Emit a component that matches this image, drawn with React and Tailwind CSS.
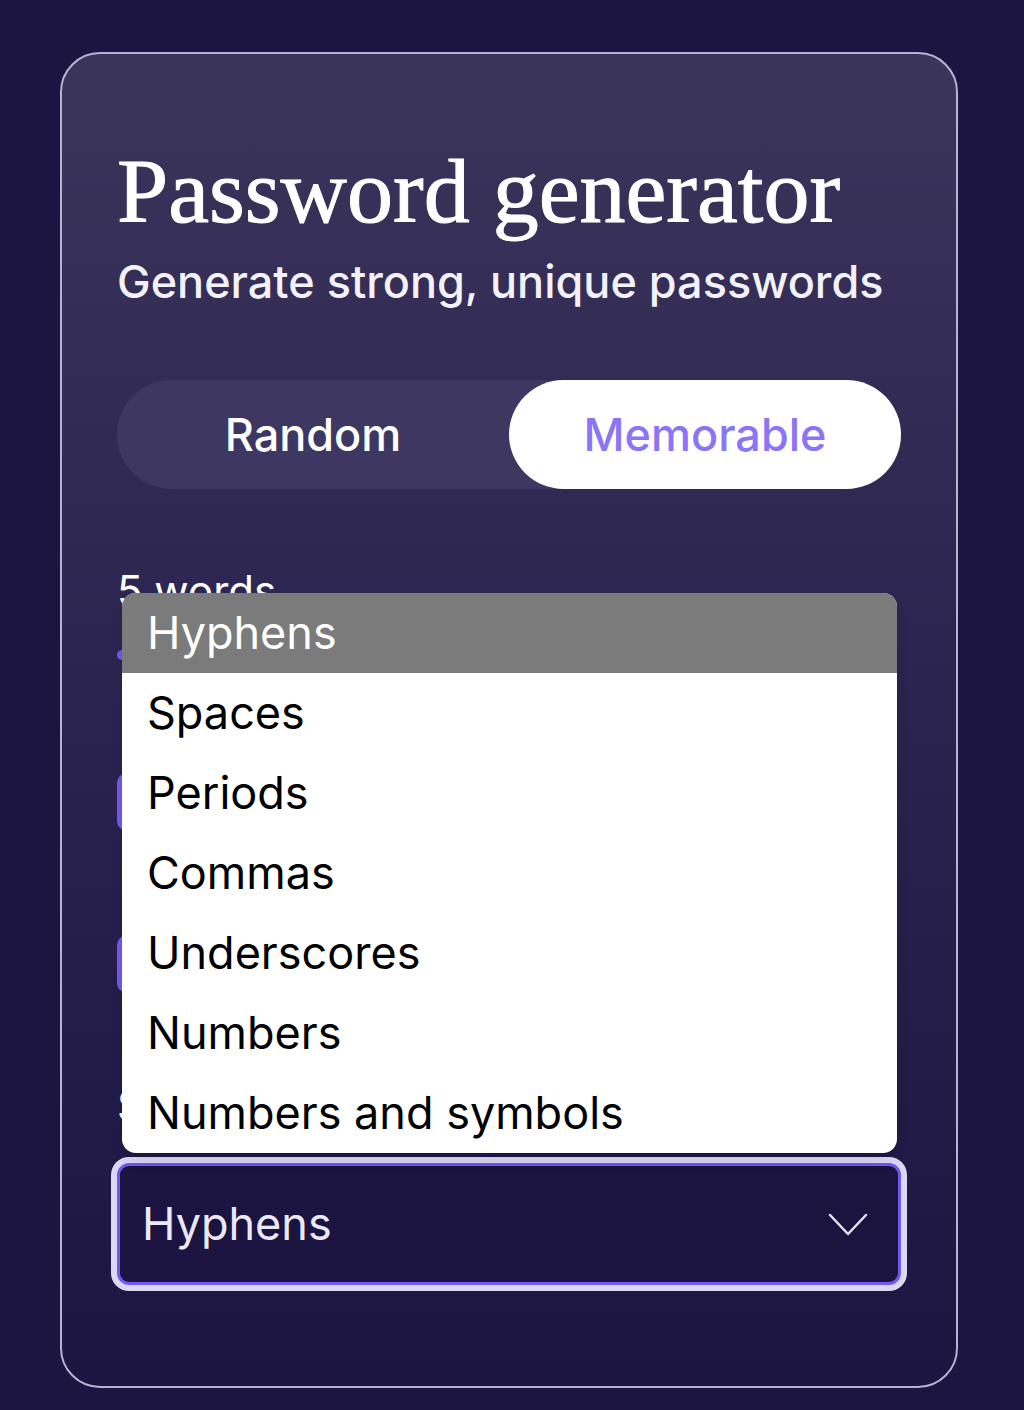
import React, { useState } from 'react';

const separators = ['Hyphens', 'Spaces', 'Periods', 'Commas', 'Underscores', 'Numbers', 'Numbers and symbols'];

const Toggle = ({ label }) => (
  <div className="flex items-center gap-6 h-[58px]">
    <div className="w-[100px] h-[58px] rounded-[10px] bg-[#7257f0] p-[6px] flex justify-end">
      <div className="w-[46px] h-[46px] rounded-[8px] bg-white"></div>
    </div>
    <span className="text-[40px] text-white">{label}</span>
  </div>
);

const App = () => {
  const [mode, setMode] = useState('memorable');
  const [separator, setSeparator] = useState('Hyphens');

  return (
    <div className="min-h-[1410px] bg-[#1c1441] pt-[52px] px-[60px] pb-[22px] font-['Inter',sans-serif]">
      <div className="relative w-[898px] h-[1336px] rounded-[40px] border-2 border-[#b9b3d3] bg-gradient-to-b from-[#3b345a] via-[#2a2350] to-[#1c1541] px-[55px] pt-[91px]">
        <h1 className="font-['Liberation_Serif',serif] text-[92px] leading-none text-white [-webkit-text-stroke:1px_white]">Password generator</h1>
        <p className="mt-[22px] text-[45px] leading-none font-medium text-[#f3f1fa]">Generate strong, unique passwords</p>

        {/* mode switch */}
        <div className="mt-[76px] h-[109px] rounded-full bg-[#3e3762] grid grid-cols-2">
          <button
            onClick={() => setMode('random')}
            className={`rounded-full text-[45px] font-medium ${mode === 'random' ? 'bg-white text-[#8b75f6]' : 'text-white'}`}
          >
            Random
          </button>
          <button
            onClick={() => setMode('memorable')}
            className={`rounded-full text-[45px] font-medium ${mode === 'memorable' ? 'bg-white text-[#8b75f6]' : 'text-white'}`}
          >
            Memorable
          </button>
        </div>

        {/* word count */}
        <div className="mt-[81px] text-[42px] leading-none text-white">5 words</div>
        <div className="mt-[38px] relative h-[10px] w-[700px] rounded-full bg-[#4a4270]">
          <div className="h-[10px] w-1/2 rounded-full bg-[#7257f0]"></div>
        </div>

        <div className="mt-[113px] flex flex-col gap-[104px]">
          <Toggle label="Capitalize" />
          <Toggle label="Include number" />
        </div>

        <div className="mt-[92px] text-[42px] leading-none text-white">Separator</div>

        {/* select */}
        <div className="mt-[36px] h-[122px] rounded-[12px] border-[3px] border-[#7257f0] ring-[6px] ring-[#dcd7f5] bg-[#1c1440] flex items-center justify-between pl-[22px] pr-[30px]">
          <span className="text-[45px] text-[#ebe9f3]">{separator}</span>
          <svg width="40" height="26" viewBox="0 0 40 26" fill="none" stroke="#e6e3f2" strokeWidth="2.5" strokeLinecap="round" strokeLinejoin="round">
            <path d="M2 4 L20 23 L38 4" />
          </svg>
        </div>

        {/* open menu */}
        <ul className="absolute left-[60px] top-[539px] w-[775px] rounded-[14px] bg-white overflow-hidden shadow-lg">
          {separators.map((s) => (
            <li
              key={s}
              onClick={() => setSeparator(s)}
              className={`h-[80px] flex items-center pl-[25px] text-[45px] ${s === separator ? 'bg-[#7b7b7b] text-white' : 'text-black'}`}
            >
              {s}
            </li>
          ))}
        </ul>
      </div>
    </div>
  );
};

export default App;
